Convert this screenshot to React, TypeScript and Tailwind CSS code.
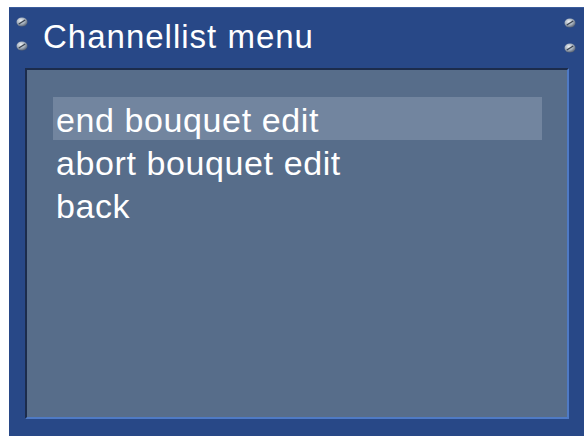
import React from "react";

function Screw() {
  return (
    <svg width="12" height="10" viewBox="0 0 12 10" className="block">
      <defs>
        <radialGradient id="sg" cx="40%" cy="35%" r="70%">
          <stop offset="0%" stopColor="#eef2f6" />
          <stop offset="55%" stopColor="#a3aebb" />
          <stop offset="100%" stopColor="#4b5668" />
        </radialGradient>
      </defs>
      <ellipse cx="6" cy="5" rx="5.5" ry="4.5" fill="url(#sg)" />
      <path d="M2.8 7 L9.2 3" stroke="#3a4350" strokeWidth="1.4" />
    </svg>
  );
}

const items = ["end bouquet edit", "abort bouquet edit", "back"];

export default function App() {
  return (
    <div className="w-[587px] h-[440px] bg-white pl-[9px] pt-[7px] pr-[3px] pb-[4px]" style={{ fontFamily: '"Liberation Sans", Arial, sans-serif' }}>
      <div className="w-full h-full bg-[#284887] flex flex-col border-t border-[#3a5c9c]">
        <div className="h-[60px] flex items-start">
          <div className="w-[26px] pl-[7px] pt-[9px] flex flex-col gap-[14px]">
            <Screw />
            <Screw />
          </div>
          <div className="pl-[8px] pt-[12px] text-[33px] leading-[34px] tracking-[1px] text-white">Channellist menu</div>
          <div className="flex-1" />
          <div className="pr-[8px] pt-[10px] flex flex-col gap-[15px]">
            <Screw />
            <Screw />
          </div>
        </div>
        <div className="flex-1 ml-[16px] mr-[15px] mb-[17px] bg-[#576d8a] border-t-2 border-l-2 border-t-[#1c2c4c] border-l-[#1c2c4c] border-b-2 border-r-2 border-b-[#4f7ac4] border-r-[#4f7ac4] pl-[26px] pr-[25px] pt-[27px]">
          {items.map((t, i) => (
            <div
              key={t}
              className={`h-[43px] leading-[47px] pl-[3px] text-[34px] tracking-[0.6px] text-white ${i === 0 ? "bg-[#72859f]" : ""}`}
            >
              {t}
            </div>
          ))}
        </div>
      </div>
    </div>
  );
}
